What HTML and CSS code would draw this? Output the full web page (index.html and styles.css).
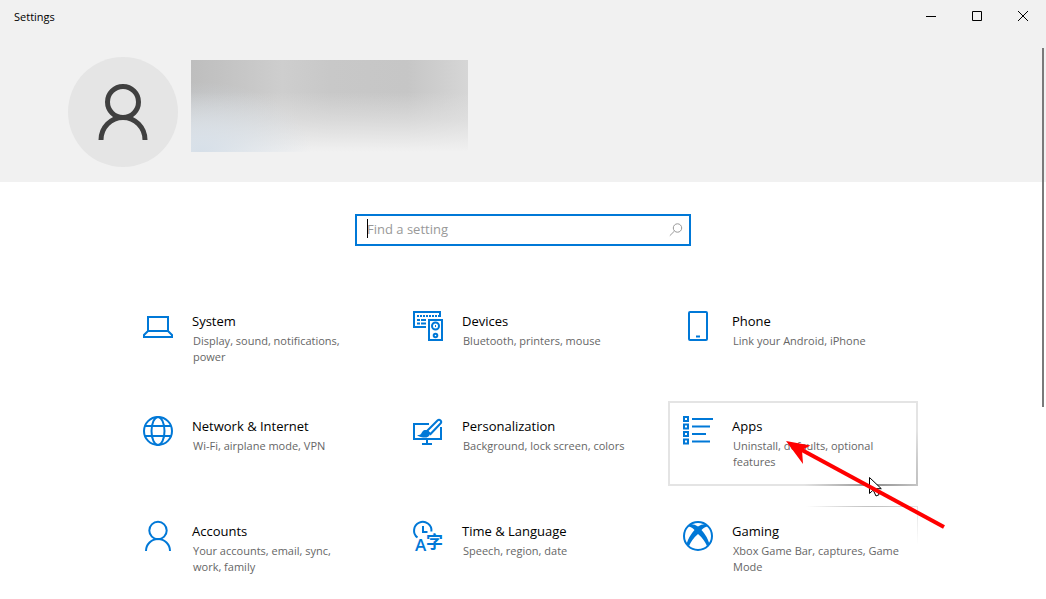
FILE: index.html
```html
<!DOCTYPE html>
<html lang="en">
  <head>
    <meta charset="UTF-8" />
    <meta name="viewport" content="width=device-width, initial-scale=1.0" />
    <title>Settings</title>
    <link rel="stylesheet" href="styles.css">
  </head>

  <body>
    <header class="header">
      <div class="title-bar">
        <span class="title">Settings</span>
        <div class="window-buttons">
          <button aria-label="Minimize">
            <svg width="10" height="10"><path d="M0 5.5h10" /></svg>
          </button>
          <button aria-label="Maximize">
            <svg width="10" height="10"><path d="M.5.5h9v9h-9z" /></svg>
          </button>
          <button aria-label="Close">
            <svg width="10" height="10"><path d="M0 0l10 10M10 0L0 10" /></svg>
          </button>
        </div>
      </div>
      <div class="user">
        <div class="avatar">
          <svg width="50" height="56" viewBox="0 0 50 56">
            <circle cx="25" cy="18" r="15.5" />
            <path d="M3 56a22 22.5 0 0 1 44 0" />
          </svg>
        </div>
        <div class="user-info"></div>
      </div>
    </header>

    <main>
      <form class="search">
        <input type="text" placeholder="Find a setting" aria-label="Find a setting" />
        <svg class="search-icon" width="14" height="14" viewBox="0 0 14 14">
          <circle cx="8.5" cy="5" r="4.2" />
          <path d="M5.5 8L.8 12.7" />
        </svg>
        <span class="caret"></span>
      </form>

      <nav class="grid">
        <a class="tile" href="#system">
          <svg class="icon" viewBox="0 0 30 30">
            <path d="M5 20V6h20v14M5 20h20l4 4v2H1v-2z" />
          </svg>
          <div class="text">
            <h2>System</h2>
            <p>Display, sound, notifications, power</p>
          </div>
        </a>
        <a class="tile" href="#devices">
          <svg class="icon" viewBox="0 0 30 30">
            <path d="M13 16H1V1h26v5" />
            <path d="M4 5h22" stroke-dasharray="2 1" />
            <path d="M4 9h3M8 9h5M4 12.5h3M8 12.5h5" />
            <path d="M16 9h13v20H16z" />
            <circle cx="22.5" cy="15" r="3.5" />
            <circle cx="22.5" cy="24.5" r="1.8" />
            <path d="M22 15h1" />
          </svg>
          <div class="text">
            <h2>Devices</h2>
            <p>Bluetooth, printers, mouse</p>
          </div>
        </a>
        <a class="tile" href="#phone">
          <svg class="icon" viewBox="0 0 30 30">
            <rect x="6" y="1" width="18" height="28" rx="1" />
            <path d="M13 25.5h4" />
          </svg>
          <div class="text">
            <h2>Phone</h2>
            <p>Link your Android, iPhone</p>
          </div>
        </a>
        <a class="tile" href="#network">
          <svg class="icon" viewBox="0 0 30 30">
            <circle cx="15" cy="15" r="14" />
            <ellipse cx="15" cy="15" rx="6.5" ry="14" />
            <path d="M2 10h26M2 20h26" />
          </svg>
          <div class="text">
            <h2>Network &amp; Internet</h2>
            <p>Wi-Fi, airplane mode, VPN</p>
          </div>
        </a>
        <a class="tile" href="#personalization">
          <svg class="icon" viewBox="0 0 30 30">
            <path d="M16 8H1v15h27V11M14 23v4M9 28h10" />
            <path d="M14 15L24.5 4.5q1.500-1.500 3 0t0 3L17.5 18z" />
            <path class="solid" d="M4 19c4 .5 4-1.500 5.500-3.500 2-2.500 6-1.500 7 1s-1 5-4 5C9 21.500 6 21 4 19z" />
          </svg>
          <div class="text">
            <h2>Personalization</h2>
            <p>Background, lock screen, colors</p>
          </div>
        </a>
        <a class="tile hover" href="#apps">
          <svg class="icon" viewBox="0 0 30 30">
            <path d="M1 1h4v4H1zM1 8.500h4v4H1zM1 16h4v4H1zM1 23.500h4v4H1z" />
            <path d="M9 3h21M9 10.500h18M9 18h14M9 25.500h18" />
          </svg>
          <div class="text">
            <h2>Apps</h2>
            <p>Uninstall, defaults, optional features</p>
          </div>
          <!-- mouse pointer and red arrow over the tile -->
          <svg class="pointer" width="280" height="130" viewBox="0 0 280 130">
            <path class="cursor" d="M201.500 76.500v16l3.700-3.500 2.800 6 3-1.300-2.700-6h5z" />
            <path class="arrow-line" d="M133 48.500L276 126" />
            <path class="arrow-head" d="M118 40L142.500 44.500 134 49 135 63z" />
          </svg>
        </a>
        <a class="tile" href="#accounts">
          <svg class="icon" viewBox="0 0 30 30">
            <circle cx="15" cy="9.500" r="8.700" />
            <path d="M3 30a12 12 0 0 1 24 0" />
          </svg>
          <div class="text">
            <h2>Accounts</h2>
            <p>Your accounts, email, sync, work, family</p>
          </div>
        </a>
        <a class="tile" href="#time">
          <svg class="icon" viewBox="0 0 30 30">
            <path d="M4.500 16.500A8.700 8.700 0 1 1 18.400 10.500M10 5v6h4.500" />
            <text x="2" y="30" font-size="17">A</text>
            <text x="13" y="27" font-size="17">字</text>
          </svg>
          <div class="text">
            <h2>Time &amp; Language</h2>
            <p>Speech, region, date</p>
          </div>
        </a>
        <a class="tile near" href="#gaming">
          <svg class="icon" viewBox="0 0 30 30">
            <circle cx="15" cy="15" r="14" />
            <path class="solid" d="M6.500 3.500Q10.500 2.500 15 5.500 19.500 2.500 23.500 3.500L25 5.500Q21.500 5.500 18.500 9 24 15 26.500 23L24.500 26Q21 18 15 13 9 18 5.500 26L3.500 23Q6 15 11.500 9 8.500 5.500 5 5.500z" />
          </svg>
          <div class="text">
            <h2>Gaming</h2>
            <p>Xbox Game Bar, captures, Game Mode</p>
          </div>
        </a>
      </nav>
    </main>
    <div class="scroll-thumb"></div>
  </body>
</html>
```
FILE: styles.css
```css
body {
  position: relative;
  margin: 0;
  background-color: white;
  color: black;
  font-family: "Open Sans", "Noto Sans", sans-serif;
}

.header {
  background-color: #f1f1f1;
}

.title-bar {
  display: flex;
  justify-content: space-between;
  align-items: center;
  height: 32px;
  padding-left: 14px;
}

.title {
  font-size: 11px;
}

.window-buttons {
  display: flex;
}

.window-buttons button {
  display: flex;
  justify-content: center;
  align-items: center;
  width: 46px;
  height: 32px;
  padding: 0;
  border: none;
  background: none;
}

.window-buttons svg {
  fill: none;
  stroke: black;
}

.user {
  display: flex;
  gap: 13px;
  padding: 25px 68px 15px;
}

.avatar {
  display: flex;
  justify-content: center;
  align-items: center;
  width: 110px;
  height: 110px;
  border-radius: 50%;
  background-color: #e5e5e5;
}

.avatar svg {
  fill: none;
  stroke: #404040;
  stroke-width: 5px;
}

.user-info {
  width: 277px;
  height: 92px;
  margin-top: 3px;
  background-image:
    radial-gradient(ellipse 110px 70px at 10px 100%, #d6dfe8, #d0d8dd00),
    linear-gradient(to bottom, #e8e8e800 35%, #e2e2e2aa 65%, #f1f1f1 100%),
    linear-gradient(to right, #bebebe, #c3c3c3 12%, #cecece 33%, #c8c8c8 50%, #c6c6c6 78%, #d6d6d6);
}

.search {
  position: relative;
  width: 336px;
  margin: 32px auto 50px;
}

.search input {
  box-sizing: border-box;
  display: block;
  width: 100%;
  height: 32px;
  padding: 0 36px 2px 10px;
  border: 2px solid #0078d7;
  outline: none;
  font-family: inherit;
  font-size: 13px;
}

.search input::placeholder {
  color: #999;
}

.search-icon {
  position: absolute;
  top: 9px;
  right: 8px;
  fill: none;
  stroke: #999;
}

.caret {
  position: absolute;
  top: 5px;
  left: 12px;
  width: 1px;
  height: 19px;
  background-color: black;
}

.grid {
  display: grid;
  grid-template-columns: repeat(auto-fit, 250px);
  grid-auto-rows: minmax(85px, auto);
  justify-content: center;
  gap: 20px;
  max-width: 800px;
  margin: 0 auto;
}

.tile {
  position: relative;
  box-sizing: border-box;
  display: flex;
  gap: 19px;
  padding: 13px 16px 8px 13px;
  border: 2px solid transparent;
  color: black;
  text-decoration: none;
}

.tile.hover {
  background:
    linear-gradient(white, white) padding-box,
    radial-gradient(circle 70px at 206px 85px, #909090, #e4e4e4) border-box;
}

.tile.near {
  border-top: 1px solid transparent;
  padding-top: 14px;
  background:
    linear-gradient(white, white) padding-box,
    radial-gradient(circle 70px at 206px -16px, #b0b0b0, white) border-box;
  border-right: 1px solid transparent;
  padding-right: 17px;
}

.icon {
  flex-shrink: 0;
  width: 30px;
  height: 30px;
  overflow: visible;
  fill: none;
  stroke: #0078d7;
  stroke-width: 2px;
}

.icon .solid,
.icon text {
  fill: #0078d7;
  stroke: none;
}

.icon text {
  font-family: "Open Sans", "Noto Sans CJK SC", sans-serif;
  font-weight: 600;
}

.text h2 {
  margin: 0 0 2px;
  font-size: 13px;
  font-weight: normal;
  line-height: 20px;
}

.text p {
  margin: 0;
  padding-left: 1px;
  color: #666;
  font-size: 11px;
  line-height: 16px;
}

.pointer {
  position: absolute;
  top: -2px;
  left: -2px;
  z-index: 1;
  pointer-events: none;
}

.cursor {
  fill: white;
  stroke: black;
}

.arrow-line {
  stroke: red;
  stroke-width: 4px;
}

.arrow-head {
  fill: red;
}

.scroll-thumb {
  position: absolute;
  top: 48px;
  right: 2px;
  width: 2px;
  height: 60vh;
  background-color: #7a7a7a;
}
```
